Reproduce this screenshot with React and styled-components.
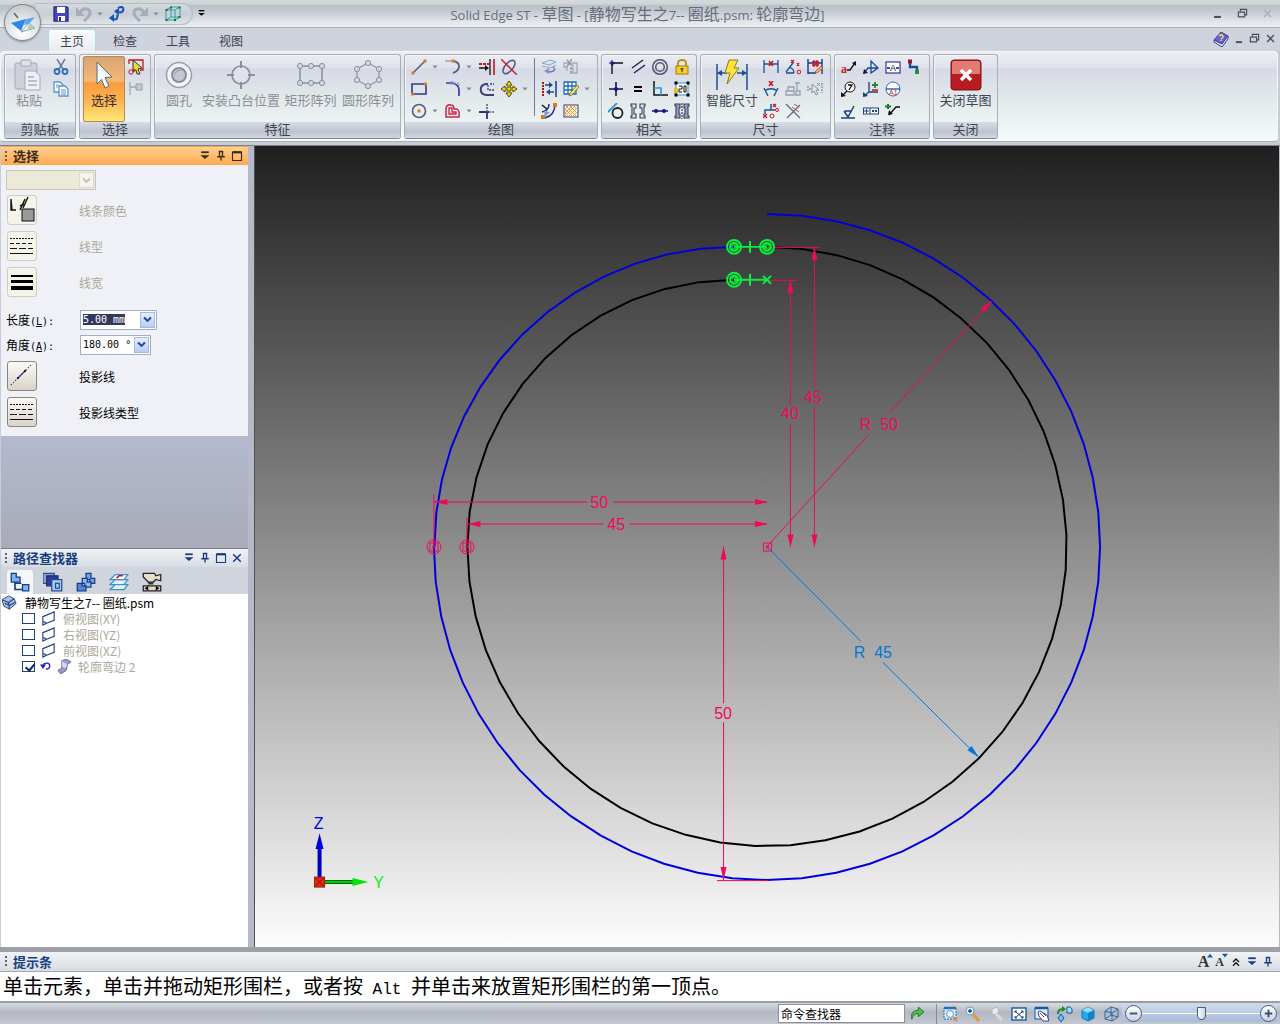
import React, { useEffect, useRef } from 'react';
import styled, { createGlobalStyle, css } from 'styled-components';

const GREY = '#8b8ea0';
const NAVY = '#101070';
const RED = '#d01020';
const BLUE = '#1c55b5';
const STEEL = '#5a5a88';

const Svg = ({ size = 16, box = 16, children }) => (
    <svg width={size} height={size} viewBox={`0 0 ${box} ${box}`} fill="none" aria-hidden="true">
        {children}
    </svg>
);

const P = ({ d, c = NAVY, w = 1.3, f = 'none', dash }) => (
    <path d={d} stroke={c} strokeWidth={w} fill={f} strokeDasharray={dash} />
);

const Dot = ({ x, y, c = '#e07820', s = 3 }) => (
    <rect x={x - s / 2} y={y - s / 2} width={s} height={s} fill={c} />
);

const Ball = ({ x, y, r = 2.6 }) => (
    <circle cx={x} cy={y} r={r} fill="#d4d7e0" stroke={GREY} />
);

const icons = {
    save: <><P d="M1 1H14L15 2V15H1Z" c="#2a2a90" f="#4646b4" /><path d="M4 1H12V7H4ZM5 10H12V15H5Z" fill="#fff" /><path d="M6 11H8V15H6Z" fill="#2a2a90" /></>,
    undo: <><P d="M4 7C7 1 14 2 14 7C14 11 11 12 8 15" c="#a9adba" w={3} /><path d="M0 1V10H9Z" fill="#a9adba" /></>,
    redo: <><P d="M12 7C9 1 2 2 2 7C2 11 5 12 8 15" c="#a9adba" w={3} /><path d="M16 1V10H7Z" fill="#a9adba" /></>,
    update: <><P d="M10 6C13 7 15 5 14 2C13 0 11 1 9 2" c={BLUE} w={2.2} /><path d="M5 5L10 2V10Z" fill={BLUE} /><P d="M5 13C8 14 9 12 8 9" c={BLUE} w={2.2} /><path d="M0 12L5 8V16Z" fill={BLUE} /></>,
    wirebox: <><P d="M1 4L6 1H15V11L10 14H1ZM1 4H10V14M10 4L15 1M6 1V11H15M6 11L1 14" c="#2aa0b4" w={1} /><Dot x={1.5} y={4} s={2} c="#167018" /><Dot x={6} y={1.5} s={2} c="#167018" /><Dot x={14.5} y={1.5} s={2} c="#167018" /><Dot x={14.5} y={11} s={2} c="#167018" /><Dot x={1.5} y={14} s={2} c="#167018" /><Dot x={10} y={14} s={2} c="#167018" /></>,
    cut: <><P d="M4 0L10 10M12 0L6 10" c="#68799c" w={1.5} /><circle cx="4" cy="12.5" r="2.5" stroke="#2c6cb8" strokeWidth="1.8" /><circle cx="12" cy="12.5" r="2.5" stroke="#2c6cb8" strokeWidth="1.8" /></>,
    copy: <><P d="M1 1H7L10 4V11H1Z" c="#5c93cc" f="#fff" /><P d="M6 5H12L15 8V15H6Z" c="#5c93cc" f="#fff" /><P d="M8 9H13M8 11H13M8 13H13M3 4H6M3 6H5" c="#5c93cc" w={1} /></>,
    filter: <><P d="M1 5V1H15V11H12" c={RED} /><path d="M5 1L14 9L10 10L12 15L9 15L8 11L5 13Z" fill="#e8dc30" stroke="#333" /><circle cx="3" cy="13" r="2.2" stroke={RED} /><P d="M5 12L7 10" c={RED} /></>,
    tree: <><P d="M2 1V14M2 6H8" c="#a3a6b2" /><path d="M8 3H14V9H8Z" fill="#c6c9d2" stroke="#9a9daa" /></>,
    line: <><P d="M2 14L14 2" c={STEEL} w={1.6} /><Dot x={2} y={14} /><Dot x={14} y={2} /></>,
    arc: <><P d="M8 2C16 3 16 11 8 14" c={STEEL} w={1.8} /><P d="M0 2H7" c="#a8a0b0" /><Dot x={8} y={2} /></>,
    trim: <><P d="M11 0V16" c="#111" /><P d="M15 0V16" c={RED} w={1.6} /><P d="M0 5H10" c={RED} w={2} dash="3 1" /><P d="M0 9H8" c="#111" /><path d="M6 6L10 9L6 12Z" fill="#111" /></>,
    trimCurve: <><ellipse cx="8" cy="8" rx="8" ry="4" transform="rotate(-50 8 8)" stroke={STEEL} strokeWidth="1.6" /><P d="M0 0L16 16" c={RED} /></>,
    rect: <><P d="M1 3H15V13H1Z" c="#36368c" w={1.6} /><Dot x={1.5} y={13} /><Dot x={14.5} y={3} /></>,
    fillet: <><P d="M1 2H7C12 3 14 6 14 9V15" c="#3838b0" w={1.7} /><P d="M9 2H14V6" c="#a0a0b0" dash="2 1" /><Dot x={7} y={2} c="#7878d0" /></>,
    offsetTool: <><P d="M9 3H7C0 4 0 13 7 14H15" c="#3d3d80" w={2} /><P d="M11 3H15M15 9H9V3" c="#3d3d80" dash="2 1" /></>,
    move: <path d="M8 0L11 4H9V7H12V5L16 8L12 11V9H9V12H11L8 16L5 12H7V9H4V11L0 8L4 5V7H7V4H5Z" fill="#f0d420" stroke="#554a10" />,
    circle: <><circle cx="8" cy="8" r="6.5" stroke={STEEL} strokeWidth="1.6" /><Dot x={8} y={8} /></>,
    offset: <><P d="M1 14V5Q2 1 6 2Q9 2 9 6H12Q15 8 14 14Z" c="#c22848" w={1.5} f="#f5e4ea" /><P d="M4 11V5H7V9H11V11Z" c="#c22848" /></>,
    extend: <><P d="M0 9H10M8 9V16" c="#303070" w={1.8} /><P d="M8 1V9M10 9H16" c={STEEL} w={1.6} dash="2 1" /></>,
    revolve: <><path d="M1 4L9 1L15 3L8 6ZM1 7L9 9L15 6" fill="#d3e6f4" stroke="#8ba8c8" /><P d="M12 8C17 12 9 14 5 12" c="#7b7bb0" w={1.6} /><path d="M3 12L8 9V15Z" fill="#9090b8" /></>,
    mirror: <><P d="M8 0V16" c="#8088a0" dash="3 1" /><P d="M6 4H1V8H4V12M10 4H14V14H10Z" c="#a3a8b8" /><P d="M4 1L7 4L4 7" c="#8088a0" /></>,
    stretch: <><P d="M2 1V15" c="#b01010" w={2} dash="2 1" /><P d="M15 0V16" c="#174c98" w={1.6} /><P d="M4 4H10M6 11H13" c="#174c98" /><path d="M8 1L12 4L8 7ZM9 8L5 11L9 14Z" fill="#174c98" /></>,
    gridEdit: <><path d="M0 1H13V13H0Z" fill="#fff" /><P d="M1 1H13V13H1ZM1 5H13M1 9H13M5 1V13M9 1V13" c="#1f69b0" /><path d="M14 4L16 6L9 14L6 15L7 12Z" fill="#f0dc6a" stroke="#705018" strokeWidth=".7" /></>,
    convert: <><P d="M1 9C5 8 8 5 8 1M4 15C11 13 14 8 14 1" c="#27379c" w={1.6} /><P d="M1 2L6 6" c="#111" w={1.5} /><path d="M3 8L9 9L4 14Z" fill="#8898d0" /><Dot x={2} y={14} s={4} /><Dot x={14} y={2} s={4} /></>,
    hatch: <><rect x="1" y="2" width="14" height="12" fill="#fff5dc" stroke="#36368c" /><P d="M2 6L5 3M2 10L9 3M2 13L12 3M6 13L14 5M10 13L14 9M11 3L14 6M7 3L14 10M3 3L13 13M2 6L9 13M2 10L5 13" c="#e09838" w={0.9} /></>,
    connect: <><P d="M4 15V7Q4 4 7 4H15" c="#111" w={1.4} /><P d="M1 4H7M4 1V7" c="#181890" w={1} /><Dot x={4} y={4} c="#181890" /></>,
    parallel: <P d="M2 9L13 1M4 14L15 6" c="#22224a" w={1.4} />,
    concentric: <><circle cx="8" cy="8" r="7.3" stroke="#5a5a78" strokeWidth="1.6" /><circle cx="8" cy="8" r="4.3" stroke="#5a5a78" strokeWidth="1.6" /></>,
    lock: <><P d="M4 8V4C4 0 12 0 12 4V8" c="#b58d12" w={1.8} /><rect x="2" y="7" width="12" height="8" fill="#f4cc2c" stroke="#a87c08" /><P d="M8 9V13M6.5 10H9.5" c="#6b4c00" /></>,
    horizVert: <><P d="M8 1V15M1 8H15" c="#111155" w={1.6} /><circle cx="8" cy="8" r="2" fill="#111188" /></>,
    equal: <P d="M4 6H12M4 10H12" c="#000" w={2} />,
    perpendicular: <><P d="M2 0V14H16" c="#111" w={1.5} /><P d="M2 7H9V14" c="#1c9edc" w={1.6} f="#d4ecf8" /></>,
    rigid: <><rect x="2" y="2" width="12" height="12" fill="#fff" stroke="#3090c8" /><P d="M5 5H8V8H5V11H8M10 5H12V11H10Z" c="#111" w={1} /><Dot x={2} y={2} c="#000" /><Dot x={14} y={2} c="#000" /><Dot x={2} y={14} c="#000" /><Dot x={14} y={14} c="#000" /><rect x="0" y="7" width="4" height="5" fill="#eabb24" /></>,
    tangent: <><P d="M0 9L9 0" c="#2698d8" w={1.8} /><circle cx="9.5" cy="10" r="5" stroke="#222" strokeWidth="1.8" /></>,
    symmetric: <P d="M1 1H6V5H4V11H6V15H1V13H2V3H1ZM15 1H10V5H12V11H10V15H15V13H14V3H15Z" c="#3b3b54" w={1.1} f="#e4e6ee" />,
    collinear: <><P d="M0 8H16" c="#111188" w={1.4} /><circle cx="4" cy="8" r="2" fill="#111188" /><circle cx="12" cy="8" r="2" fill="#111188" /></>,
    symAxis: <><P d="M1 1H6V5H5V11H6V15H1V13H2V3H1ZM15 1H10V5H11V11H10V15H15V13H14V3H15Z" c="#3a3a60" w={1.1} f="#9ca0bc" /><P d="M8 0V16" c="#111" w={1} dash="2 1" /></>,
    distance: <><P d="M1 1V14M15 1V14M1 5H15" c="#1c5290" /><P d="M6 2L10 7M10 2L6 7" c={RED} w={1.5} /></>,
    angleCoord: <><P d="M1 14H9M1 13L8 4M4 8C7 9 9 11 9 14" c="#1c5290" /><P d="M6 1L9 4M9 1L6 4M12 4L14 7M14 4L12 7" c={RED} /><circle cx="14" cy="13" r="1.8" stroke={RED} /></>,
    autoDim: <><P d="M1 0V15M15 0V15M1 4H15M1 14H9" c="#153d88" w={1.4} /><P d="M5 3H12M5 6H12M7 1V8M10 1V8" c={RED} /><path d="M14 7L16 9L10 14L8 13Z" fill="#eda96a" stroke="#a04a24" strokeWidth=".7" /></>,
    angle: <><P d="M1 7L5 15M15 7L11 15M2 10C5 7 11 7 14 10" c="#1c5290" w={1.4} /><P d="M6 0L10 5M10 0L6 5" c={RED} w={1.5} /></>,
    dimGrey1: <P d="M1 14H9V10H1ZM3 10V6H9V14M10 2H15M12 2V9M10 14H15V10H11V14" c="#9b9fac" />,
    dimGrey2: <><P d="M1 5V11M15 2V12M2 8H4" c="#8d91a2" dash="2 1" /><P d="M5 3V12L7 10L9 14L11 13L9 9H12ZM10 2L13 5M13 2L10 5" c="#8d91a2" w={1} /></>,
    coordinate: <><P d="M8 1V7H2V11M8 7H12" c="#1c5290" w={1.5} /><P d="M0 11L4 15M4 11L0 15M10 1L13 4M13 1L10 4" c={RED} /><circle cx="14" cy="7" r="1.5" stroke={RED} /><circle cx="9" cy="13" r="2" stroke={RED} /></>,
    symDiam: <><P d="M1 1L15 15M15 2L2 15" c="#666a7c" w={1.3} /><P d="M7 4L14 9M9 1L14 4" c="#a34a6c" w={0.9} /></>,
    leader: <><P d="M6 11H9L14 4" c="#111" /><path d="M15 2V7L11 4Z" fill="#111155" /><text x="0" y="14" fontFamily="Liberation Serif, serif" fontWeight="700" fontSize="12" fill={RED}>a</text></>,
    weld: <><P d="M1 14L5 9H15M8 2V14L15 9Z" c="#1c4890" /><path d="M0 15L1 10L5 14Z" fill="#111155" /></>,
    datum: <><rect x="1" y="3" width="14" height="11" fill="#fff" stroke="#111188" /><P d="M2 9H5M11 9H14" c="#111188" /><text x="5" y="12" fontFamily="Liberation Sans, sans-serif" fontSize="9" fill="#111">A</text></>,
    connector: <><P d="M3 3V8H10V13" c="#174c98" w={2.4} /><Dot x={3} y={2.5} s={4} c="#a01030" /><Dot x={10} y={13} s={4} c="#1c9430" /></>,
    balloon: <><circle cx="9" cy="6" r="5" fill="#fff" stroke="#111" /><P d="M6 10L1 15M7 4H11L8 9" c="#111" /><path d="M0 16V11L5 15Z" fill="#111" /></>,
    edgeCond: <><P d="M6 1V11H15M6 11L1 15" c="#17407c" /><P d="M12 1V7M9 4H15" c="#17902c" w={1.8} /><P d="M9 9H15" c={RED} /><path d="M0 16V11L5 15Z" fill="#17407c" /></>,
    target: <><circle cx="8" cy="8" r="7" fill="#fff" stroke="#3264b4" /><P d="M1 8H15" c="#3264b4" /><text x="4" y="14" fontFamily="Liberation Sans, sans-serif" fontSize="7" fill={RED}>A1</text></>,
    surface: <><P d="M0 15H14" c="#17407c" w={1.5} /><P d="M3 8L7 14L13 3M4 8H10" c="#17407c" w={1.5} /></>,
    fcf: <><rect x="0.5" y="5" width="15" height="6" fill="#fff" stroke="#17407c" /><P d="M7 5V11M1 8H6M3.5 6V10M9 7L11 9M11 7L9 9M12 7L14 9M14 7L12 9" c="#17407c" w={1} /></>,
    leaderAdd: <><P d="M3 1V6M0 3.5H6" c="#17802c" w={2} /><P d="M15 4H11L4 12" c="#111" /><path d="M3 12L4 7L8 11Z" fill="#111" /></>,
    help: <><path d="M1 9L8 1L15 5L9 13Z" fill="#6464d8" stroke="#3a3a98" /><path d="M1 9V11L9 16L15 8V5L9 13Z" fill="#e5e5ff" stroke="#3a3a98" /><P d="M6 5C9 2 12 6 8 8M8 9V10" c="#f7cf42" w={1.7} /></>,
    drop: <><P d="M3 3H13" c="currentColor" w={2.4} /><path d="M2 7H14L8 12Z" fill="currentColor" /></>,
    pin: <P d="M5 2H11M6 2V9M10 2V9M3 9H13M8 9V14" c="currentColor" w={1.8} />,
    maximize: <><P d="M2 3H14V14H2Z" c="currentColor" w={1.5} /><P d="M2 3H14" c="currentColor" w={3} /></>,
    close: <P d="M3 3L13 13M13 3L3 13" c="currentColor" w={2} />,
    minimize: <P d="M3 13H13" c="currentColor" w={3} />,
    restore: <><P d="M5 5V2H14V10H11" c="currentColor" w={1.7} /><P d="M2 6H11V13H2Z" c="currentColor" w={1.7} /></>,
    chevrons: <P d="M4 8L8 4L12 8M4 13L8 9L12 13" c="#111" w={1.8} />,
    caretDown: <path d="M3 5H13L8 11Z" fill="currentColor" />,
    check: <P d="M3 5L8 10L13 5" c="currentColor" w={3} />,
    pathTree: <><P d="M4 7V14H10M4 9H9" c="#173c80" /><path d="M1 1H5V4H8V8H1Z" fill="#78b8f0" stroke="#173c80" /><path d="M10 10H15V15H10Z" fill="#78b8f0" stroke="#173c80" /></>,
    layers: <><path d="M0 1H9V9H0Z" fill="#8ca4d4" stroke="#364a88" /><path d="M3 3H12V11H3Z" fill="#2a3c98" stroke="#1f2b70" /><path d="M7 6H15V15H7Z" fill="#aacdf4" stroke="#284b90" /><rect x="10" y="9" width="3" height="4" stroke="#284b90" /></>,
    family: <><path d="M8 1H12V5H15V9H11V6H8Z" fill="#6aa4e8" stroke="#1c3b80" /><path d="M5 5H9V8H12V12H7V9H5Z" fill="#86bcf4" stroke="#1c3b80" /><path d="M1 9H5V11H8V15H1Z" fill="#4c88d8" stroke="#1c3b80" /></>,
    sheets: <><path d="M1 14L5 10H15L12 14ZM1 10L5 6H15L12 10Z" fill="#e2f4fc" stroke="#3d94c8" /><path d="M1 6L5 2H15L12 6Z" fill="#fff" stroke="#3d94c8" /><P d="M6 5L8 3H11" c={RED} /></>,
    camera: <><path d="M1 1H10L11 3L15 2V7L11 6L9 8H5L1 4Z" fill="#e4e0cc" stroke="#222" /><path d="M5 8H9V10H5Z" fill="#333" /><path d="M1 11H15V15H1Z" fill="#ded9c4" stroke="#222" /><path d="M5 11V15L2 13ZM11 11V15L14 13Z" fill="#111" /></>,
    part: <><path d="M0 5L7 1L13 4L15 9L8 15L2 12Z" fill="#a8c1e8" stroke="#27477c" /><P d="M0 5L7 8L13 4M7 8L8 15M3 9L8 11L14 8" c="#27477c" /></>,
    plane: <P d="M2 6L14 1V10L6 13L2 15ZM2 11L6 13" c="#1c3f90" w={1.2} />,
    rollback: <><P d="M4 8C5 3 13 3 13 8C13 11 11 12 8 12" c="#2020c8" w={1.8} /><path d="M0 6H8L4 12Z" fill="#2020c8" /></>,
    flange: <><path d="M5 2L10 0L15 3L11 6L10 12L4 16L1 12L5 10Z" fill="#9a98cc" stroke="#66649c" /><path d="M5 2L10 5L11 6L9 10L5 8Z" fill="#d4d2ee" /></>,
    go: <path d="M1 15C-1 6 5 4 9 4V0L16 6L9 12V8C5 8 3 10 1 15Z" fill="#4fc044" stroke="#126a20" />,
    zoomArea: <><rect x="2" y="2" width="12" height="11" fill="#d5eafa" stroke="#2470b4" strokeDasharray="2 1" /><P d="M2 2H14" c="#2470b4" w={2.5} /><circle cx="8" cy="8" r="3.5" fill="#eef9ff" stroke="#5894c4" /><P d="M11 11L15 15" c="#d88838" w={2.2} /></>,
    zoom: <><circle cx="5" cy="5" r="4" fill="#e8f5ff" stroke="#6a9cc8" /><P d="M3 5H7M5 3V7" c="#173f80" /><P d="M8 8L14 15" c="#e39a3e" w={3} /></>,
    zoomOff: <><path d="M4 3L9 1L11 5L8 9L4 8Z" fill="#e8e9ed" stroke="#b3b6bd" /><P d="M8 8L14 14" c="#d9dade" w={3} /></>,
    fit: <><rect x="1" y="2" width="14" height="12" fill="#fff" stroke="#17599c" strokeWidth="1.4" /><P d="M4 5L12 12M12 5L4 12M4 7V5H6M10 5H12V7M12 10V12H10M6 12H4V10" c="#173f80" w={1} /></>,
    pan: <><rect x="1" y="2" width="13" height="11" fill="#d9effb" stroke="#17599c" /><P d="M1 2H14" c="#17599c" w={2.5} /><path d="M4 6L6 5L13 9L15 15H9L5 10Z" fill="#fff" stroke="#444880" /><P d="M6 7L10 11M8 6L12 10" c="#444880" w={1} /></>,
    rotate: <><P d="M1 8C1 5 3 3 6 3" c="#218830" w={2} /><path d="M5 0L9 3L5 6Z" fill="#218830" /><path d="M10 1H13L15 3V7H10Z" fill="#9ae2ff" stroke="#17599c" /><path d="M4 8L7 12L4 16L1 12Z" fill="#58c8f4" stroke="#17599c" /></>,
    cube: <><path d="M2 4L8 1L14 4V12L8 15L2 12Z" fill="#25a8ec" stroke="#1477b8" /><path d="M2 4L8 1L14 4L8 7Z" fill="#8de0ff" /><path d="M8 7L14 4V12L8 15Z" fill="#1383cc" /></>,
    wireCube: <P d="M2 5L8 1L15 3V11L9 15L2 13ZM2 5L9 7V15M9 7L15 3M8 1V9L2 13M8 9L15 11" c="#2c68a8" w={1} />,
};

const big = {
    paste: <><rect x="2" y="4" width="22" height="26" rx="2" fill="#cdd0da" stroke="#a5a9b6" /><rect x="8" y="1" width="10" height="6" rx="1" fill="#dfe1e8" stroke="#a5a9b6" /><path d="M12 12H22L27 17V31H12Z" fill="#eff0f4" stroke="#a5a9b6" /><P d="M15 18H21M15 22H24M15 26H24" c="#a9adba" /></>,
    select: <path d="M9 3L24 18L17 18.5L21 27L17 29L13.5 20.5L9 25Z" fill="#f4fbff" stroke="#5b6b78" />,
    hole: <><circle cx="16" cy="16" r="12.5" fill="#f3f4f8" stroke="#9c9eab" strokeWidth="1.5" /><circle cx="16" cy="16" r="7" fill="#c4c6d2" stroke="#8b8d9c" strokeWidth="2" /><path d="M11 18A7 7 0 0 1 20 11A8 8 0 0 0 11 18Z" fill="#777a8b" /></>,
    boss: <><circle cx="16" cy="16" r="9" fill="#dfe2e9" stroke={GREY} strokeWidth="1.7" /><P d="M16 2V9M16 23V30M2 16H9M23 16H30" c={GREY} w={2} /></>,
    rectArray: <><P d="M5 7H27V24H5Z" c={GREY} w={1.5} />{[5, 16, 27].map(x => <React.Fragment key={x}><Ball x={x} y={7} /><Ball x={x} y={24} /></React.Fragment>)}</>,
    circArray: <><P d="M16 4L27 10V21L16 27L5 21V10Z" c={GREY} w={1.2} /><Ball x={16} y={4} /><Ball x={27} y={10} /><Ball x={27} y={21} /><Ball x={16} y={27} /><Ball x={5} y={21} /><Ball x={5} y={10} /></>,
    smartDim: <><P d="M1 5V31M31 5V31M2 14H11M21 14H30" c="#1c4d94" w={1.5} /><path d="M1 14L6 11V17ZM31 14L26 11V17Z" fill="#1c4d94" /><path d="M13 1H22L18 9H23L11 25L14 14H9Z" fill="#ffe338" stroke="#8d7920" /></>,
    closeSketch: <><rect x="1" y="1" width="30" height="30" rx="3" fill="#b81c20" stroke="#791018" /><path d="M2 4Q2 2 4 2H28Q30 2 30 4V15H2Z" fill="#e27a76" /><P d="M11 11L21 21M21 11L11 21" c="#fff" w={3.5} /></>,
};

const propIcons = {
    color: <><P d="M3 3V14H8M3 3L4 14M12 14L17 3M15 12L20 1M12 10L16 8" c="#111" w={1.4} /><rect x="14" y="13" width="12" height="12" fill="#999" stroke="#111" /></>,
    type: <><P d="M2 6.5H25" c="#111" w={1} dash="2 1" /><P d="M2 11.5H25" c="#111" w={1} dash="4 2" /><P d="M2 16.5H25" c="#111" w={1} dash="7 2" /><P d="M2 21.5H25" c="#111" w={1} /></>,
    width: <><P d="M3 8H25" c="#000" w={2} /><P d="M3 13.5H25" c="#000" w={3} /><P d="M3 20H25" c="#000" w={4} /></>,
    project: <><P d="M3 23L24 2" c="#333" dash="1 2" /><P d="M9 17L18 8" c="#44449c" w={1.5} /><Dot x={10} y={16} s={2} c="#222" /><Dot x={17} y={9} s={2} c="#222" /></>,
};

const Tool = ({ name, label, menu, disabled }) => (
    <ToolCell>
        <ToolButton aria-label={label || name} disabled={disabled}><Svg>{icons[name]}</Svg></ToolButton>
        {menu && <MenuArrow aria-label={`${label || name} menu`}><Svg size={8}>{icons.caretDown}</Svg></MenuArrow>}
    </ToolCell>
);

const BigTool = ({ name, label, width, active, disabled }) => (
    <BigButton $width={width} $active={active} disabled={disabled}>
        <Svg size={32} box={32}>{big[name]}</Svg>
        <span>{label}</span>
    </BigButton>
);

const Group = ({ title, width, children }) => (
    <GroupBox $width={width}>
        <GroupBody>{children}</GroupBody>
        <GroupTitle>{title}</GroupTitle>
    </GroupBox>
);

const PanelHead = ({ title, active, tools }) => (
    <PanelHeader $active={active}>
        <Grip />
        <h2>{title}</h2>
        <PanelTools>
            {tools.map(t => <PlainButton key={t} aria-label={t}><Svg size={12}>{icons[t]}</Svg></PlainButton>)}
        </PanelTools>
    </PanelHeader>
);

const ComboField = ({ id, value, width, selected }) => {
    const ref = useRef(null);

    useEffect(() => {
        if (selected) {
            ref.current.focus();
            ref.current.select();
        }
    }, [selected]);

    return (
        <Combo $width={width}>
            <input id={id} ref={ref} defaultValue={value} />
            <button aria-label="展开"><Svg size={11}>{icons.check}</Svg></button>
        </Combo>
    );
};

// points along an arc, angles in degrees with 0 at the right and y pointing down
const arcPoints = (cx, cy, r, from, to, steps) =>
    Array.from({ length: steps + 1 }, (_, i) => {
        const a = ((from + ((to - from) * i) / steps) * Math.PI) / 180;
        return `${(cx + r * Math.cos(a)).toFixed(1)},${(cy + r * Math.sin(a)).toFixed(1)}`;
    }).join(' ');

const Arrow = ({ x, y, angle, color }) => (
    <polygon points="0,0 -13,-3 -13,3" fill={color} transform={`translate(${x} ${y}) rotate(${angle})`} />
);

const PINK = '#f0085c';
const LIME = '#08f03c';

const GreenEnd = ({ x, y }) => (
    <g stroke={LIME} strokeWidth="2">
        <circle cx={x} cy={y} r="7" />
        <circle cx={x} cy={y} r="4" />
        <rect x={x - 2} y={y - 2} width="4" height="4" strokeWidth="1" />
    </g>
);

const PinkEnd = ({ x, y }) => (
    <g stroke={PINK}>
        <circle cx={x} cy={y} r="7" />
        <rect x={x - 4} y={y - 4} width="8" height="8" />
        <rect x={x - 1} y={y - 1} width="2" height="2" />
    </g>
);

const Sketch = () => (
    <Drawing viewBox="255 145 1024 802" fill="none" role="img" aria-label="轮廓弯边">
        <g strokeWidth="2">
            <polyline stroke="#0000dc" points={`${arcPoints(767, 546.5, 333.5, -90, 180, 45)} ${arcPoints(734, 546, 300, 180, 270, 14)}`} />
            <polyline stroke="#000" points={`${arcPoints(767, 546, 300, -90, 180, 40)} ${arcPoints(734, 546, 267, 180, 270, 12)}`} />
        </g>
        <g stroke={PINK}>
            <path d="M434 501.5H587M613 501.5H767M467 523.5H603M630 523.5H767M433.5 494V546M466.5 517V546" />
            <path d="M790.5 279V404M790.5 423V546M814.5 246V387M814.5 406V546M767 279.5H797M767 246.5H820" />
            <path d="M723.5 546V703M723.5 722V880M717 880.5H768" />
            <path d="M767 546L869 434M889 413L992 300" />
        </g>
        <path d="M767 546L861 641M883 662L979 757" stroke="#0874d4" />
        <Arrow x={434} y={501.5} angle={180} color={PINK} />
        <Arrow x={768} y={501.5} angle={0} color={PINK} />
        <Arrow x={467} y={523.5} angle={180} color={PINK} />
        <Arrow x={768} y={523.5} angle={0} color={PINK} />
        <Arrow x={790.5} y={279} angle={-90} color={PINK} />
        <Arrow x={790.5} y={547} angle={90} color={PINK} />
        <Arrow x={814.5} y={246} angle={-90} color={PINK} />
        <Arrow x={814.5} y={547} angle={90} color={PINK} />
        <Arrow x={723.5} y={546} angle={-90} color={PINK} />
        <Arrow x={723.5} y={880} angle={90} color={PINK} />
        <Arrow x={992} y={300} angle={-47} color={PINK} />
        <Arrow x={979} y={757} angle={45} color="#0874d4" />
        <DimText x="599" y="507">50</DimText>
        <DimText x="616" y="529">45</DimText>
        <DimText x="790" y="418">40</DimText>
        <DimText x="813" y="402">45</DimText>
        <DimText x="723" y="719">50</DimText>
        <DimText x="879" y="429">R{'\u00a0\u00a0'}50</DimText>
        <DimText x="873" y="658" $color="#0874d4">R{'\u00a0\u00a0'}45</DimText>
        <PinkEnd x={433.5} y={546.5} />
        <PinkEnd x={466.5} y={546.5} />
        <g stroke={PINK}>
            <rect x="763.5" y="542.5" width="8" height="8" />
            <rect x="766.5" y="545.5" width="2" height="2" />
        </g>
        <path d="M734 246H767M750 240V252M734 279H767M750 273V285M763 275L771 283M771 275L763 283" stroke={LIME} strokeWidth="2" />
        <GreenEnd x={734} y={246} />
        <GreenEnd x={767} y={246} />
        <GreenEnd x={734} y={279} />
        <path d="M319 882V848" stroke="#0000c0" strokeWidth="4" />
        <path d="M319 833L323 849H315Z" fill="#0000e8" />
        <path d="M319 882H353" stroke="#006800" strokeWidth="4" />
        <path d="M319 882H353" stroke="#08c808" strokeWidth="2" />
        <path d="M368 882L352 886V878Z" fill="#08e008" />
        <rect x="314" y="877" width="10" height="10" fill="#e82808" stroke="#902010" />
        <path d="M315 878L323 886M323 878L315 886" stroke="#801008" />
        <DimText x="318" y="829" $color="#0000e8">Z</DimText>
        <DimText x="378" y="888" $color="#08f020">Y</DimText>
    </Drawing>
);

const planes = ['俯视图(XY)', '右视图(YZ)', '前视图(XZ)'];
const viewTools = ['zoomArea', 'zoom', 'zoomOff', 'fit', 'pan', 'rotate', 'cube', 'wireCube'];

const App = () => (
    <Window>
        <GlobalStyle />
        <TitleBar>
            <AppButton aria-label="Solid Edge">
                <Svg size={36} box={36}>
                    <path d="M6 18L21 14L16 26Z" fill="#2d86e8" />
                    <path d="M21 14L30 12L24 19L19 20Z" fill="#58a8f0" />
                    <path d="M16 27L24 18L30 23Z" fill="#f4faf8" stroke="#8aa0a0" />
                    <path d="M24 18L30 23L22 25Z" fill="#a8d0c4" />
                    <P d="M9 8L13 13" c="#666" w={1.6} />
                </Svg>
            </AppButton>
            <TitleLeft>
                <QuickBar>
                    <Tool name="save" label="保存" />
                    <Tool name="undo" label="撤销" menu disabled />
                    <Tool name="update" label="更新" />
                    <Tool name="redo" label="重做" menu disabled />
                    <Tool name="wirebox" label="视图" />
                </QuickBar>
                <PlainButton aria-label="自定义"><Svg size={9}>{icons.drop}</Svg></PlainButton>
            </TitleLeft>
            <Title>Solid Edge ST - <b>草图</b> - [<b>静物写生之</b>7-- <b>圈纸</b>.psm: <b>轮廓弯边</b>]</Title>
            <WindowButtons>
                <PlainButton aria-label="最小化"><Svg size={11}>{icons.minimize}</Svg></PlainButton>
                <PlainButton aria-label="还原"><Svg size={11}>{icons.restore}</Svg></PlainButton>
                <PlainButton aria-label="关闭" $faded><Svg size={11}>{icons.close}</Svg></PlainButton>
            </WindowButtons>
        </TitleBar>

        <TabRow>
            <Tab $active>主页</Tab>
            <Tab>检查</Tab>
            <Tab>工具</Tab>
            <Tab>视图</Tab>
            <DocButtons>
                <PlainButton aria-label="帮助"><Svg size={16}>{icons.help}</Svg></PlainButton>
                <PlainButton aria-label="最小化文档"><Svg size={10}>{icons.minimize}</Svg></PlainButton>
                <PlainButton aria-label="还原文档"><Svg size={11}>{icons.restore}</Svg></PlainButton>
                <PlainButton aria-label="关闭文档"><Svg size={11}>{icons.close}</Svg></PlainButton>
            </DocButtons>
        </TabRow>

        <Ribbon>
            <Group title="剪贴板" width={72}>
                <BigTool name="paste" label="粘贴" width={42} disabled />
                <ToolGrid $cols="22px">
                    <Tool name="cut" />
                    <Tool name="copy" />
                </ToolGrid>
            </Group>
            <Group title="选择" width={72}>
                <BigTool name="select" label="选择" width={42} active />
                <ToolGrid $cols="22px">
                    <Tool name="filter" />
                    <Tool name="tree" disabled />
                </ToolGrid>
            </Group>
            <Group title="特征" width={247}>
                <BigTool name="hole" label="圆孔" width={42} disabled />
                <BigTool name="boss" label="安装凸台位置" width={82} disabled />
                <BigTool name="rectArray" label="矩形阵列" width={57} disabled />
                <BigTool name="circArray" label="圆形阵列" width={58} disabled />
            </Group>
            <Group title="绘图" width={194}>
                <ToolGrid $cols="34px 34px 22px 34px">
                    <Tool name="line" menu /><Tool name="arc" menu /><Tool name="trim" /><Tool name="trimCurve" />
                    <Tool name="rect" /><Tool name="fillet" menu /><Tool name="offsetTool" /><Tool name="move" menu />
                    <Tool name="circle" menu /><Tool name="offset" menu /><Tool name="extend" />
                </ToolGrid>
                <Divider />
                <ToolGrid $cols="22px 34px">
                    <Tool name="revolve" disabled /><Tool name="mirror" disabled />
                    <Tool name="stretch" /><Tool name="gridEdit" menu />
                    <Tool name="convert" /><Tool name="hatch" />
                </ToolGrid>
            </Group>
            <Group title="相关" width={96}>
                <ToolGrid $cols="22px 22px 22px 22px">
                    <Tool name="connect" /><Tool name="parallel" /><Tool name="concentric" /><Tool name="lock" />
                    <Tool name="horizVert" /><Tool name="equal" /><Tool name="perpendicular" /><Tool name="rigid" />
                    <Tool name="tangent" /><Tool name="symmetric" /><Tool name="collinear" /><Tool name="symAxis" />
                </ToolGrid>
            </Group>
            <Group title="尺寸" width={131}>
                <BigTool name="smartDim" label="智能尺寸" width={56} />
                <ToolGrid $cols="22px 22px 22px">
                    <Tool name="distance" /><Tool name="angleCoord" /><Tool name="autoDim" />
                    <Tool name="angle" /><Tool name="dimGrey1" disabled /><Tool name="dimGrey2" disabled />
                    <Tool name="coordinate" /><Tool name="symDiam" />
                </ToolGrid>
            </Group>
            <Group title="注释" width={96}>
                <ToolGrid $cols="22px 22px 22px 22px">
                    <Tool name="leader" /><Tool name="weld" /><Tool name="datum" /><Tool name="connector" />
                    <Tool name="balloon" /><Tool name="edgeCond" /><Tool name="target" /><span />
                    <Tool name="surface" /><Tool name="fcf" /><Tool name="leaderAdd" />
                </ToolGrid>
            </Group>
            <Group title="关闭" width={65}>
                <BigTool name="closeSketch" label="关闭草图" width={57} />
            </Group>
        </Ribbon>

        <Main>
            <Dock>
                <PanelHead title="选择" active tools={['drop', 'pin', 'maximize']} />
                <SelectPanel>
                    <SelectBox>
                        <select disabled aria-label="样式"><option> </option></select>
                        <SelectArrow><Svg size={11}>{icons.check}</Svg></SelectArrow>
                    </SelectBox>
                    <PropRow $muted>
                        <PropButton id="line-color" disabled><Svg size={28} box={28}>{propIcons.color}</Svg></PropButton>
                        <label htmlFor="line-color">线条颜色</label>
                    </PropRow>
                    <PropRow $muted>
                        <PropButton id="line-type" disabled><Svg size={28} box={28}>{propIcons.type}</Svg></PropButton>
                        <label htmlFor="line-type">线型</label>
                    </PropRow>
                    <PropRow $muted>
                        <PropButton id="line-width" disabled><Svg size={28} box={28}>{propIcons.width}</Svg></PropButton>
                        <label htmlFor="line-width">线宽</label>
                    </PropRow>
                    <Fields>
                        <FieldRow>
                            <label htmlFor="length">长度<i>(<u>L</u>):</i></label>
                            <ComboField id="length" value="5.00 mm" width={77} selected />
                        </FieldRow>
                        <FieldRow>
                            <label htmlFor="angle">角度<i>(<u>A</u>):</i></label>
                            <ComboField id="angle" value="180.00 °" width={71} />
                        </FieldRow>
                    </Fields>
                    <PropRow>
                        <PropButton id="project"><Svg size={28} box={28}>{propIcons.project}</Svg></PropButton>
                        <label htmlFor="project">投影线</label>
                    </PropRow>
                    <PropRow>
                        <PropButton id="project-type"><Svg size={28} box={28}>{propIcons.type}</Svg></PropButton>
                        <label htmlFor="project-type">投影线类型</label>
                    </PropRow>
                </SelectPanel>
                <DockSpace />
                <PanelHead title="路径查找器" tools={['drop', 'pin', 'maximize', 'close']} />
                <FinderTabs>
                    {['pathTree', 'layers', 'family', 'sheets', 'camera'].map((n, i) => (
                        <FinderTab key={n} $active={i === 0} aria-label={n}><Svg size={20}>{icons[n]}</Svg></FinderTab>
                    ))}
                </FinderTabs>
                <Tree>
                    <TreeRoot><Svg size={15}>{icons.part}</Svg><span>静物写生之7-- 圈纸.psm</span></TreeRoot>
                    {planes.map(name => (
                        <TreeItem key={name}>
                            <label><CheckBox type="checkbox" /><Svg size={15}>{icons.plane}</Svg><span>{name}</span></label>
                        </TreeItem>
                    ))}
                    <TreeItem $feature>
                        <label>
                            <CheckBox type="checkbox" defaultChecked />
                            <Svg size={12}>{icons.rollback}</Svg>
                            <Svg size={15}>{icons.flange}</Svg>
                            <span>轮廓弯边 2</span>
                        </label>
                    </TreeItem>
                </Tree>
            </Dock>
            <Canvas><Sketch /></Canvas>
        </Main>

        <PromptHeader>
            <Grip />
            <h2>提示条</h2>
            <PromptTools>
                <FontButton aria-label="放大字体" $size={16}>A<Svg size={6}><path d="M0 12L8 2L16 12Z" fill={BLUE} /></Svg></FontButton>
                <FontButton aria-label="缩小字体" $size={12}>A<Svg size={6}><path d="M0 2H16L8 12Z" fill={BLUE} /></Svg></FontButton>
                <PlainButton aria-label="折叠"><Svg size={12}>{icons.chevrons}</Svg></PlainButton>
                <PlainButton aria-label="菜单"><Svg size={12}>{icons.drop}</Svg></PlainButton>
                <PlainButton aria-label="固定"><Svg size={12}>{icons.pin}</Svg></PlainButton>
            </PromptTools>
        </PromptHeader>
        <Prompt>单击元素，单击并拖动矩形围栏，或者按<code> Alt </code>并单击来放置矩形围栏的第一顶点。</Prompt>

        <StatusBar>
            <FinderInput aria-label="命令查找器" defaultValue="命令查找器" />
            <GoButton aria-label="查找"><Svg size={13}>{icons.go}</Svg></GoButton>
            <ViewTools>
                {viewTools.map(n => <ViewButton key={n} aria-label={n}><Svg>{icons[n]}</Svg></ViewButton>)}
            </ViewTools>
            <ZoomBar>
                <RoundButton aria-label="缩小"><Svg size={15}><P d="M4 8H12" c="#444c60" w={2} /></Svg></RoundButton>
                <ZoomRange type="range" aria-label="缩放" defaultValue={50} />
                <RoundButton aria-label="放大"><Svg size={15}><P d="M4 8H12M8 4V12" c="#444c60" w={2} /></Svg></RoundButton>
            </ZoomBar>
        </StatusBar>
    </Window>
);

export default App;

const GlobalStyle = createGlobalStyle`
  * { box-sizing: border-box; }
  body {
    margin: 0;
    overflow: hidden;
    font-family: "Noto Sans CJK SC", sans-serif;
    font-size: 12px;
    color: #000;
  }
  button, input, select { font: inherit; color: inherit; margin: 0; padding: 0; }
  button { border: none; background: none; }
  h1, h2, p, ul { margin: 0; padding: 0; }
  svg { display: block; flex: none; }
`;

const Window = styled.div`
  height: 100vh;
  display: flex;
  flex-direction: column;
  background: #c6cbd4;
`;

const TitleBar = styled.header`
  position: relative;
  flex: 0 0 28px;
  display: grid;
  grid-template-columns: 1fr auto 1fr;
  align-items: center;
  padding-right: 5px;
  border-bottom: 1px solid #a7aebb;
  background: linear-gradient(#d6d9da 0, #cfd4d8 4px, #b7bfc9 6px, #c5ccd4 12px, #e2e6ea 22px, #eceef0 27px);
`;

const AppButton = styled.button`
  position: absolute;
  left: 4px;
  top: 4px;
  z-index: 2;
  width: 37px;
  height: 37px;
  border: 1px solid #808894;
  border-radius: 50%;
  background: radial-gradient(circle at 50% 80%, #fff, #d8dcdf 60%, #b5bbc2);
  box-shadow: 0 1px 2px #858c98;
`;

const TitleLeft = styled.div`
  display: flex;
  align-items: center;
  gap: 4px;
  padding-left: 36px;
`;

const QuickBar = styled.div`
  display: flex;
  align-items: center;
  gap: 1px;
  height: 22px;
  padding: 0 8px 0 14px;
  border: 1px solid #b5bcc6;
  border-left: none;
  border-radius: 0 11px 11px 0;
  background: linear-gradient(#d4d9df, #c8ced6 50%, #dfe3e8);
`;

const PlainButton = styled.button`
  display: flex;
  color: ${p => (p.$faded ? '#a9adb5' : 'inherit')};
`;

const Title = styled.h1`
  white-space: pre;
  font: 13px "Open Sans", "Noto Sans CJK SC", sans-serif;
  line-height: 24px;
  color: #686d78;

  b {
    font: 16px "Noto Sans CJK SC", sans-serif;
    line-height: 24px;
  }
`;

const WindowButtons = styled.div`
  display: flex;
  justify-content: flex-end;
  gap: 14px;
  padding-right: 2px;
  color: #4a4e5a;
`;

const TabRow = styled.nav`
  flex: 0 0 23px;
  display: flex;
  align-items: flex-end;
  gap: 5px;
  padding-left: 48px;
  background: #cfd3dd;
`;

const Tab = styled.button`
  width: 48px;
  height: 22px;
  color: #3c4150;
  border-radius: 3px 3px 0 0;
  ${p => p.$active && css`
    background: linear-gradient(#fafcfd, #e8ebf0);
    border: 1px solid #b2dce2;
    border-bottom: none;
  `}
`;

const DocButtons = styled.div`
  display: flex;
  align-items: center;
  gap: 5px;
  height: 21px;
  margin: 0 0 auto auto;
  padding-right: 4px;
  color: #4a4e58;
`;

const Ribbon = styled.section`
  flex: 0 0 90px;
  display: flex;
  gap: 3px;
  padding: 2px 3px;
  margin: 0 2px 3px 0;
  border: 1px solid #f5f7f9;
  border-bottom-color: #a9afba;
  border-radius: 4px;
  background: linear-gradient(#eceef1 0, #e0e3ea 15px, #d6dae6 17px, #e2e8ea 45px, #f3fbfb 88px);
`;

const GroupBox = styled.div`
  flex: 0 0 ${p => p.$width}px;
  display: flex;
  flex-direction: column;
  border: 1px solid #a9aeb9;
  border-bottom-color: #7f8593;
  border-radius: 3px;
  box-shadow: inset 1px 1px #f3f5f8;
  overflow: hidden;
`;

const GroupBody = styled.div`
  flex: 1;
  display: flex;
  padding: 1px 3px 0;
`;

const GroupTitle = styled.div`
  height: 16px;
  font-size: 13px;
  line-height: 14px;
  text-align: center;
  color: #3f4452;
  background: linear-gradient(#d9dce4, #bfc3d0 60%, #d3d6df);
`;

const BigButton = styled.button`
  width: ${p => p.$width}px;
  height: 66px;
  padding-top: 3px;
  display: flex;
  flex-direction: column;
  align-items: center;
  font-size: 13px;
  line-height: 17px;
  white-space: nowrap;
  color: ${p => (p.disabled ? '#8d8f98' : '#3f4452')};
  ${p => p.$active && css`
    color: #38302c;
    border: 1px solid #b58a50;
    padding-top: 2px;
    border-radius: 2px;
    background: linear-gradient(#d8a572 0, #f5b878 24px, #fb9a3c 26px, #fdb552 44px, #ffe878 64px);
  `}
`;

const ToolGrid = styled.div`
  display: grid;
  grid-template-columns: ${p => p.$cols};
  grid-auto-rows: 22px;
  align-content: start;
`;

const ToolCell = styled.div`
  display: flex;
  align-items: center;
`;

const ToolButton = styled.button`
  width: 22px;
  height: 22px;
  display: flex;
  align-items: center;
  justify-content: center;
`;

const MenuArrow = styled.button`
  width: 10px;
  height: 22px;
  display: flex;
  align-items: center;
  justify-content: center;
  color: #858994;
`;

const Divider = styled.div`
  width: 1px;
  margin: 2px 3px 6px 2px;
  background: #73799a;
`;

const Main = styled.main`
  flex: 1;
  min-height: 0;
  display: flex;
  border-top: 1px solid #7d828c;
  background: #b6bac8;
`;

const Dock = styled.aside`
  flex: 0 0 248px;
  display: flex;
  flex-direction: column;
  margin-right: 6px;
  border-left: 1px solid #c8ccd8;
`;

const PanelHeader = styled.div`
  flex: 0 0 19px;
  display: flex;
  align-items: center;
  padding: 0 5px 0 4px;
  color: ${p => (p.$active ? '#3a2c18' : '#173e80')};
  background: ${p => (p.$active ? 'linear-gradient(#ffcf90, #ffa94e)' : 'linear-gradient(#f0f2f5, #d8dde5)')};
  border-top: 1px solid ${p => (p.$active ? '#e8a95c' : '#777c92')};

  h2 {
    flex: 1;
    font-size: 13px;
    line-height: 18px;
  }
`;

const Grip = styled.span`
  width: 2px;
  height: 11px;
  margin-right: 6px;
  background: repeating-linear-gradient(#5c6078 0 2px, transparent 2px 4px);
`;

const PanelTools = styled.div`
  display: flex;
  gap: 4px;
`;

const SelectPanel = styled.div`
  padding: 5px 5px 6px;
  background: #eff1f6;
`;

const SelectBox = styled.div`
  position: relative;
  width: 90px;
  margin-bottom: 2px;

  select {
    display: block;
    width: 100%;
    height: 20px;
    appearance: none;
    border: 1px solid #c9c7ba;
    border-radius: 0;
    background: #ece9d8;
    opacity: 1;
  }
`;

const SelectArrow = styled.span`
  position: absolute;
  top: 2px;
  right: 2px;
  width: 15px;
  height: 16px;
  display: flex;
  align-items: center;
  justify-content: center;
  border: 1px solid #dddbd0;
  background: #f5f4ec;
  color: #c5c2b4;
  pointer-events: none;
`;

const PropRow = styled.div`
  display: flex;
  align-items: center;
  height: 36px;
  padding-left: 1px;
  gap: 42px;
  color: ${p => (p.$muted ? '#aca899' : '#000')};
`;

const PropButton = styled.button`
  width: 30px;
  height: 30px;
  border: 1px solid #8a887c;
  border-radius: 3px;
  background: linear-gradient(#fbfaf7, #d8d4cc);

  &:disabled {
    border-color: #cfcdc0;
    background: #f5f4ea;
  }
`;

const Fields = styled.div`
  padding: 7px 0 1px;
`;

const FieldRow = styled.div`
  display: flex;
  align-items: center;
  height: 25px;

  label {
    width: 74px;
  }

  i {
    font: 10px "DejaVu Sans Mono", monospace;
  }
`;

const Combo = styled.div`
  display: flex;
  width: ${p => p.$width}px;
  height: 20px;
  padding: 1px;
  border: 1px solid #9fb0c4;
  background: #fff;

  input {
    flex: 1;
    min-width: 0;
    padding-left: 1px;
    border: none;
    outline: none;
    background: none;
    font: 10px "DejaVu Sans Mono", monospace;
  }

  input::selection {
    color: #fff;
    background: #34395c;
  }

  button {
    width: 15px;
    display: flex;
    align-items: center;
    justify-content: center;
    border: 1px solid #a4b8e0;
    background: linear-gradient(#e6efff, #b8ccf4);
    color: #24488c;
  }
`;

const DockSpace = styled.div`
  flex: 0 0 112px;
  background: linear-gradient(#b4b9cf, #a9abb8);
`;

const FinderTabs = styled.div`
  flex: 0 0 27px;
  display: flex;
  align-items: flex-end;
  gap: 7px;
  padding-left: 6px;
  background: #d0d4dd;
`;

const FinderTab = styled.button`
  width: 26px;
  height: 24px;
  display: flex;
  align-items: center;
  justify-content: center;
  border-radius: 3px 3px 0 0;
  background: ${p => (p.$active ? '#f4f6f9' : 'none')};
`;

const Tree = styled.ul`
  flex: 1;
  list-style: none;
  background: #fff;
`;

const TreeRoot = styled.li`
  display: flex;
  align-items: center;
  gap: 8px;
  height: 16px;
  padding-left: 1px;
`;

const TreeItem = styled.li`
  height: 16px;
  padding-left: 21px;
  color: #aca899;

  label {
    display: flex;
    align-items: center;
    height: 16px;
    gap: ${p => (p.$feature ? 5 : 6)}px;
  }

  span {
    margin-left: 1px;
    white-space: pre;
  }
`;

const CheckBox = styled.input`
  appearance: none;
  width: 13px;
  height: 11px;
  border: 1px solid #1c4670;
  background: #fff;

  &:checked::after {
    content: '';
    display: block;
    width: 4px;
    height: 7px;
    margin: 0 0 0 4px;
    border: solid #102c50;
    border-width: 0 2px 2px 0;
    transform: rotate(40deg);
  }
`;

const Canvas = styled.section`
  flex: 1;
  min-width: 0;
  margin-right: 1px;
  border-left: 1px solid #505050;
  background: linear-gradient(#1f1f1f, #fcfcfc);
`;

const Drawing = styled.svg`
  width: 100%;
  height: 100%;
`;

const DimText = styled.text`
  font-family: "Liberation Sans", sans-serif;
  font-size: 16px;
  text-anchor: middle;
  fill: ${p => p.$color || PINK};
`;

const PromptHeader = styled.div`
  flex: 0 0 25px;
  display: flex;
  align-items: center;
  padding: 0 6px 0 5px;
  border-top: 5px solid #9da0a7;
  border-bottom: 1px solid #a3a8b0;
  color: #173e80;
  background: linear-gradient(#f1f3f5, #d8dde3);

  h2 {
    flex: 1;
    font-size: 13px;
    line-height: 18px;
  }
`;

const PromptTools = styled.div`
  display: flex;
  align-items: center;
  gap: 4px;
`;

const FontButton = styled.button`
  display: flex;
  align-items: flex-start;
  margin-right: -2px;
  font: 700 ${p => p.$size}px "Liberation Serif", serif;
  line-height: 18px;
  color: #333;

  svg {
    margin-left: -2px;
  }
`;

const Prompt = styled.p`
  flex: 0 0 29px;
  padding-left: 3px;
  font-size: 20px;
  line-height: 27px;
  white-space: pre;
  background: #fff;

  code {
    font: 16px "Liberation Mono", monospace;
  }
`;

const StatusBar = styled.footer`
  flex: 0 0 23px;
  display: flex;
  align-items: center;
  justify-content: flex-end;
  padding-right: 3px;
  border-top: 2px solid #999da5;
  background: linear-gradient(#d7dbe0, #b2b7c1 45%, #c5c8d0);
`;

const FinderInput = styled.input`
  width: 127px;
  height: 19px;
  padding-left: 2px;
  border: 1px solid #8c919c;
  background: #fff;
`;

const GoButton = styled.button`
  width: 32px;
  height: 20px;
  display: flex;
  align-items: center;
  padding-left: 6px;
  border-right: 1px solid #858a96;
`;

const ViewTools = styled.div`
  display: flex;
  padding-left: 1px;
`;

const ViewButton = styled.button`
  width: 23px;
  height: 20px;
  display: flex;
  align-items: center;
  justify-content: center;
`;

const ZoomBar = styled.div`
  display: flex;
  align-items: center;
  width: 155px;
  padding-left: 3px;
  background: linear-gradient(#c9d9ee, #a9bcd6);
`;

const RoundButton = styled.button`
  width: 17px;
  height: 17px;
  display: flex;
  align-items: center;
  justify-content: center;
  border: 1px solid #4a5c80;
  border-radius: 50%;
  background: linear-gradient(#fff, #c4d2e6);
`;

const ZoomRange = styled.input`
  flex: 1;
  min-width: 0;
  height: 16px;
  appearance: none;
  background: linear-gradient(#fff, #fff) center / 100% 1px no-repeat;

  &::-webkit-slider-thumb {
    appearance: none;
    width: 9px;
    height: 13px;
    border: 1px solid #4a5c80;
    border-radius: 1px 1px 5px 5px;
    background: linear-gradient(90deg, #fff, #c4d2e6);
  }
`;
